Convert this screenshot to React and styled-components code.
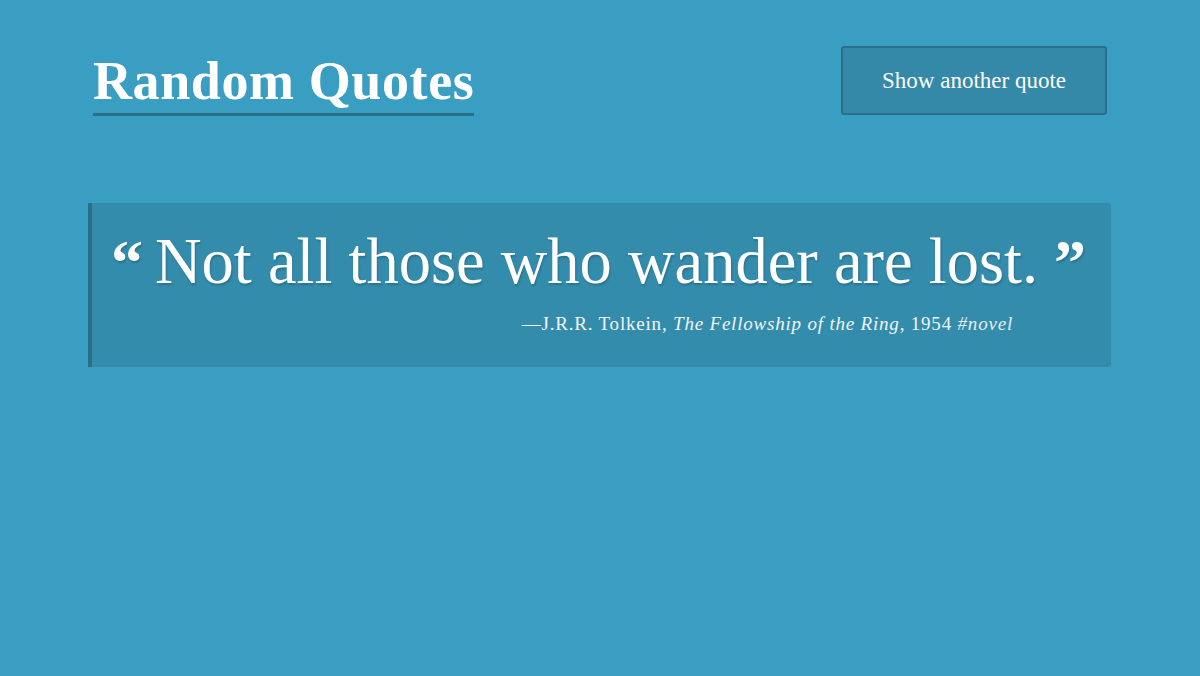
import React from "react"
import styled, { createGlobalStyle } from "styled-components"

const GlobalStyle = createGlobalStyle`
  html, body {
    margin: 0;
    padding: 0;
    background: #399ec1;
  }
  body {
    font-family: "Liberation Serif", "DejaVu Serif", serif;
    color: #fff;
  }
`

const quote = {
  text: "Not all those who wander are lost.",
  author: "J.R.R. Tolkein",
  source: "The Fellowship of the Ring",
  year: "1954",
  tag: "novel",
}

export default function App() {
  return (
    <>
      <GlobalStyle />
      <Page>
        <Header>
          <Title>Random Quotes</Title>
          <NextButton>Show another quote</NextButton>
        </Header>
        <QuoteCard>
          <QuoteText>
            <Mark>“</Mark>
            {quote.text}
            <Mark $close>”</Mark>
          </QuoteText>
          <Cite>
            —{quote.author}, <em>{quote.source}</em>, {quote.year} <Tag>#{quote.tag}</Tag>
          </Cite>
        </QuoteCard>
      </Page>
    </>
  )
}

const Page = styled.main`
  min-height: 676px;
  box-sizing: border-box;
  padding: 46px 89px 0 88px;
`

const Header = styled.header`
  display: flex;
  justify-content: space-between;
  align-items: flex-start;
  padding: 0 4px 0 5px;
`

const Title = styled.h1`
  margin: 6px 0 0;
  font-size: 54px;
  font-weight: 700;
  line-height: 58px;
  letter-spacing: 0.6px;
  padding-bottom: 3px;
  border-bottom: 3px solid #2c6e85;
`

const NextButton = styled.button`
  width: 266px;
  height: 69px;
  box-sizing: border-box;
  background: #3489a9;
  border: 2px solid #2b6f89;
  border-radius: 3px;
  color: #fff;
  font-family: inherit;
  font-size: 23px;
  cursor: pointer;
`

const QuoteCard = styled.section`
  margin-top: 87px;
  background: #338cab;
  border-left: 4px solid #2a6e87;
  border-radius: 0 3px 3px 0;
  padding: 18px 28px 31px 19px;
`

const QuoteText = styled.p`
  margin: 0;
  font-size: 64.5px;
  line-height: 82px;
  text-shadow: 1px 2px 2px rgba(0, 0, 0, 0.18);
  white-space: nowrap;
`

const Mark = styled.span`
  font-size: 64px;
  font-weight: 700;
  line-height: 0;
  vertical-align: -1px;
  margin: ${({ $close }) => ($close ? "0 0 0 16px" : "0 12px 0 0")};
`

const Cite = styled.p`
  margin: 9px 0 0;
  padding-right: 70px;
  text-align: right;
  font-size: 19px;
  letter-spacing: 0.8px;
  line-height: 24px;
  color: #f2f6f8;

  em {
    font-style: italic;
  }
`

const Tag = styled.span`
  font-style: italic;
  color: #e4eef2;
`
